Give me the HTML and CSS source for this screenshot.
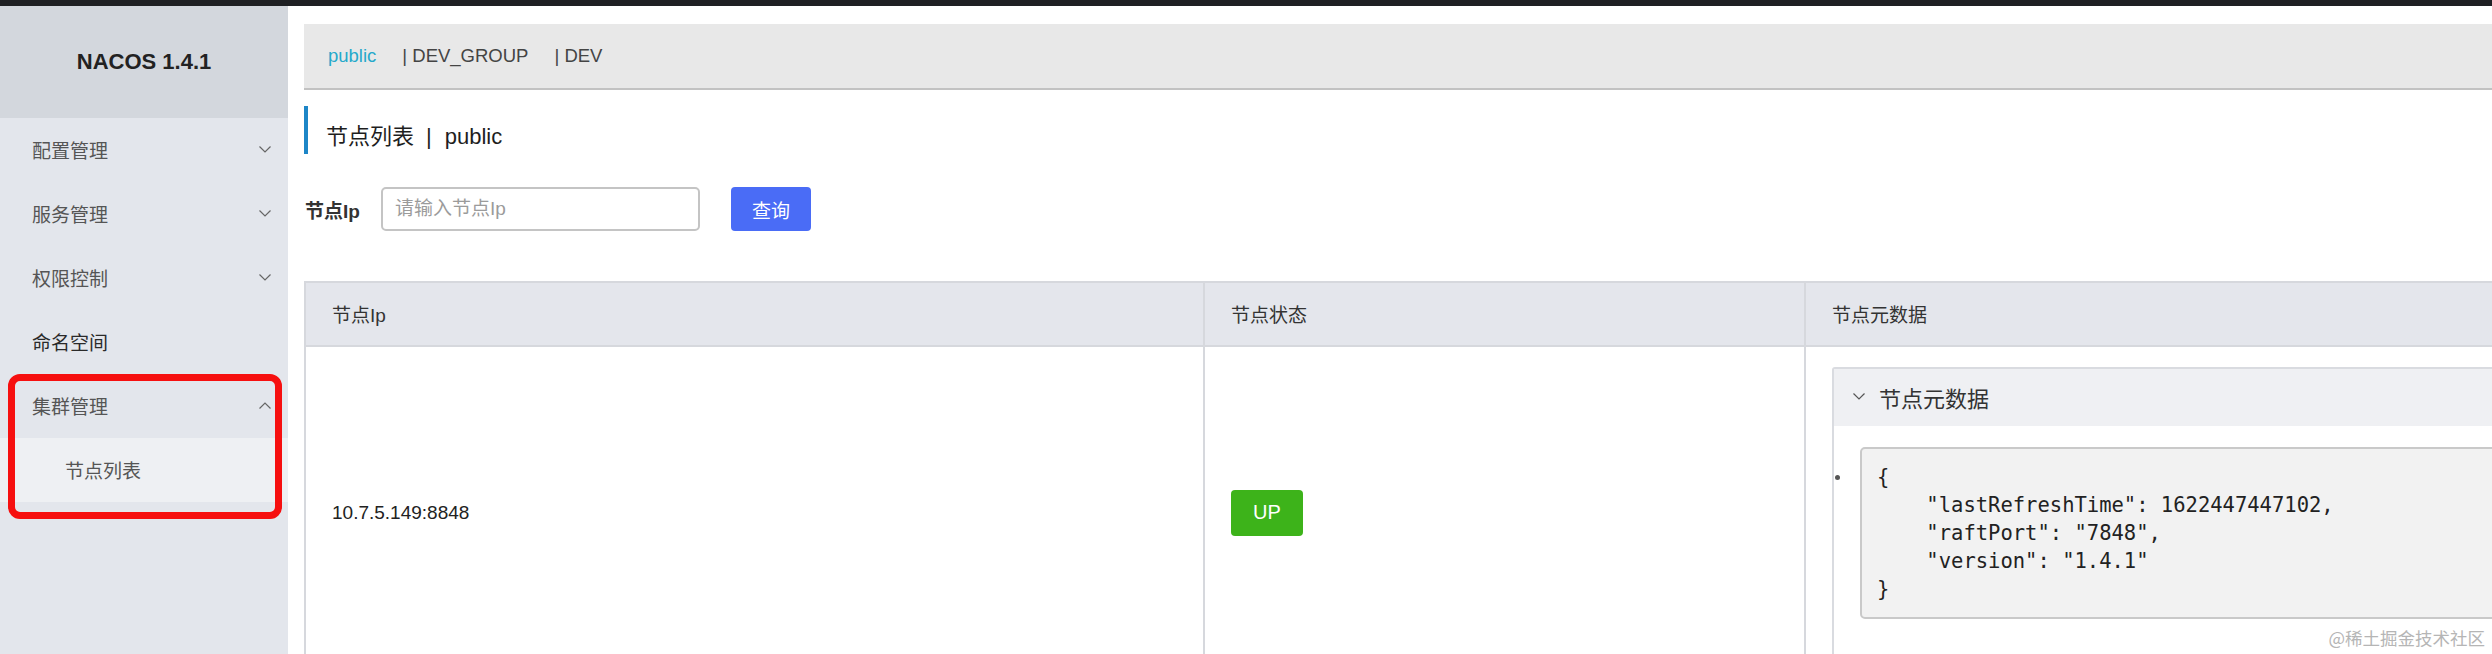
FILE: index.html
```html
<!DOCTYPE html>
<html lang="zh-CN">
<head>
<meta charset="utf-8">
<title>Nacos 节点列表</title>
<link rel="stylesheet" href="styles.css">
</head>
<body>
<div class="topbar"></div>
<div class="layout">
  <aside class="sidebar">
    <div class="logo">NACOS 1.4.1</div>
    <nav class="menu">
      <div class="menu-item"><span>配置管理</span><svg class="chev" viewBox="0 0 12 7" width="12" height="7"><path d="M0.5 0.5 L6 6 L11.5 0.5" /></svg></div>
      <div class="menu-item"><span>服务管理</span><svg class="chev" viewBox="0 0 12 7" width="12" height="7"><path d="M0.5 0.5 L6 6 L11.5 0.5" /></svg></div>
      <div class="menu-item"><span>权限控制</span><svg class="chev" viewBox="0 0 12 7" width="12" height="7"><path d="M0.5 0.5 L6 6 L11.5 0.5" /></svg></div>
      <div class="menu-item strong"><span>命名空间</span></div>
      <div class="menu-item"><span>集群管理</span><svg class="chev" viewBox="0 0 12 7" width="12" height="7"><path d="M0.5 6.5 L6 1 L11.5 6.5" /></svg></div>
      <div class="submenu-item">节点列表</div>
    </nav>
    <div class="highlight"></div>
  </aside>
  <main class="main">
    <div class="ns-bar">
      <span class="ns active">public</span>
      <span class="ns">| DEV_GROUP</span>
      <span class="ns">| DEV</span>
    </div>
    <h1 class="page-title">节点列表<span class="sep">|</span>public</h1>
    <form class="search">
      <label class="search-label">节点Ip</label>
      <input class="search-input" type="text" placeholder="请输入节点Ip">
      <button class="search-btn" type="button">查询</button>
    </form>
    <table class="nodes">
      <colgroup>
        <col class="c1">
        <col class="c2">
        <col class="c3">
      </colgroup>
      <thead>
        <tr><th>节点Ip</th><th>节点状态</th><th>节点元数据</th></tr>
      </thead>
      <tbody>
        <tr>
          <td>10.7.5.149:8848</td>
          <td><span class="badge-up">UP</span></td>
          <td class="meta-cell">
            <div class="panel">
              <div class="panel-head">
                <svg class="panel-arrow" viewBox="0 0 12 7" width="12" height="7"><path d="M0.5 0.5 L6 6 L11.5 0.5" /></svg>
                <span>节点元数据</span>
              </div>
              <div class="panel-body">
                <span class="dot"></span>
<pre class="code">{
    "lastRefreshTime": 1622447447102,
    "raftPort": "7848",
    "version": "1.4.1"
}</pre>
              </div>
            </div>
          </td>
        </tr>
      </tbody>
    </table>
  </main>
</div>
<div class="watermark">@稀土掘金技术社区</div>
</body>
</html>
```
FILE: styles.css
```css
* { box-sizing: border-box; }

html, body {
  margin: 0;
  padding: 0;
}

body {
  width: 2492px;
  height: 654px;
  overflow: hidden;
  position: relative;
  background: #fff;
  color: #333;
  font-family: "Liberation Sans", "Noto Sans CJK SC", sans-serif;
}

.topbar {
  height: 6px;
  background: #1f2023;
}

.layout {
  display: flex;
  height: 648px;
}

/* ---------- sidebar ---------- */
.sidebar {
  position: relative;
  width: 288px;
  flex: none;
  background: #e3e6ec;
}

.logo {
  height: 112px;
  background: #d3d7dd;
  display: flex;
  align-items: center;
  justify-content: center;
  font-size: 22px;
  font-weight: bold;
  color: #222;
}

.menu-item {
  height: 64px;
  display: flex;
  align-items: center;
  justify-content: space-between;
  padding: 0 17px 2px 32px;
  font-size: 19px;
  color: #555;
}

.menu-item.strong { color: #2a2a2a; }

.chev {
  fill: none;
  stroke: #666;
  stroke-width: 1.2;
}

.submenu-item {
  height: 64px;
  display: flex;
  align-items: center;
  padding: 0 0 2px 65px;
  background: #eef0f3;
  font-size: 19px;
  color: #555;
}

.highlight {
  position: absolute;
  left: 8px;
  top: 368px;
  width: 274px;
  height: 145px;
  border: 7px solid #f60f0f;
  border-radius: 12px;
}

/* ---------- main ---------- */
.main {
  flex: 1;
  min-width: 0;
  overflow: hidden;
  padding: 18px 0 0 16px;
}

.ns-bar {
  height: 66px;
  background: #e8e8e8;
  border-bottom: 2px solid #c2c2c2;
  display: flex;
  align-items: center;
  gap: 26px;
  padding-left: 24px;
  font-size: 18.5px;
  color: #444;
}

.ns.active { color: #25a9cb; }

.page-title {
  margin: 16px 0 0;
  height: 48px;
  border-left: 4px solid #1d86c7;
  padding: 18px 0 4px 18px;
  font-size: 22px;
  line-height: 26px;
  font-weight: normal;
  color: #1e1e1e;
}

.sep { margin: 0 13px 0 12px; }

.search {
  margin: 33px 0 0;
  padding-left: 1px;
  display: flex;
  align-items: center;
}

.search-label {
  font-size: 19px;
  font-weight: bold;
  color: #333;
  margin-right: 21px;
}

.search-input {
  width: 319px;
  height: 44px;
  border: 2px solid #c4c4c4;
  border-radius: 5px;
  padding: 0 12px;
  font-family: inherit;
  font-size: 19px;
  color: #333;
  outline: none;
}

.search-input::placeholder { color: #9b9b9b; }

.search-btn {
  margin-left: 31px;
  width: 80px;
  height: 44px;
  border: none;
  border-radius: 4px;
  background: #4a6cf6;
  color: #fff;
  font-family: inherit;
  font-size: 19px;
}

/* ---------- table ---------- */
.nodes {
  margin: 50px 0 0 0;
  width: 2400px;
  table-layout: fixed;
  border-collapse: separate;
  border-spacing: 0;
  border-top: 2px solid #d6d8dd;
  border-left: 2px solid #d6d8dd;
}

.c1 { width: 899px; }
.c2 { width: 601px; }

.nodes th,
.nodes td {
  border-right: 2px solid #d6d8dd;
  border-bottom: 2px solid #d6d8dd;
  text-align: left;
  font-size: 19px;
}

.nodes th {
  height: 64px;
  padding: 0 26px 2px 26px;
  background: #e4e6ec;
  font-weight: normal;
  color: #333;
}

.nodes td {
  padding: 20px 26px 20px 26px;
  vertical-align: middle;
  color: #222;
}

.badge-up {
  display: inline-flex;
  align-items: center;
  justify-content: center;
  width: 72px;
  height: 46px;
  border-radius: 4px;
  background: #3db31a;
  color: #fff;
  font-size: 20px;
}

.panel {
  border: 2px solid #d9dbe0;
  border-radius: 3px;
}

.panel-head {
  height: 57px;
  display: flex;
  align-items: center;
  gap: 14px;
  padding: 0 0 2px 19px;
  background: #eff0f3;
  font-size: 22px;
  color: #333;
}

.panel-arrow {
  fill: none;
  stroke: #555;
  stroke-width: 1.2;
}

.panel-body {
  display: flex;
  align-items: flex-start;
  padding: 21px 0 37px 0;
}

.dot {
  flex: none;
  width: 5px;
  height: 5px;
  margin: 28px 0 0 1px;
  border-radius: 50%;
  background: #555;
}

.code {
  flex: 1;
  margin: 0 0 0 20px;
  padding: 14px 15px;
  background: #f2f2f2;
  border: 2px solid #c9c9c9;
  border-radius: 5px;
  font-family: "DejaVu Sans Mono", monospace;
  font-size: 20.5px;
  line-height: 28px;
  color: #222;
}

.watermark {
  position: absolute;
  right: 7px;
  bottom: 4px;
  font-family: "Noto Sans CJK SC", sans-serif;
  font-size: 17.5px;
  color: #b5b5b5;
}
```
